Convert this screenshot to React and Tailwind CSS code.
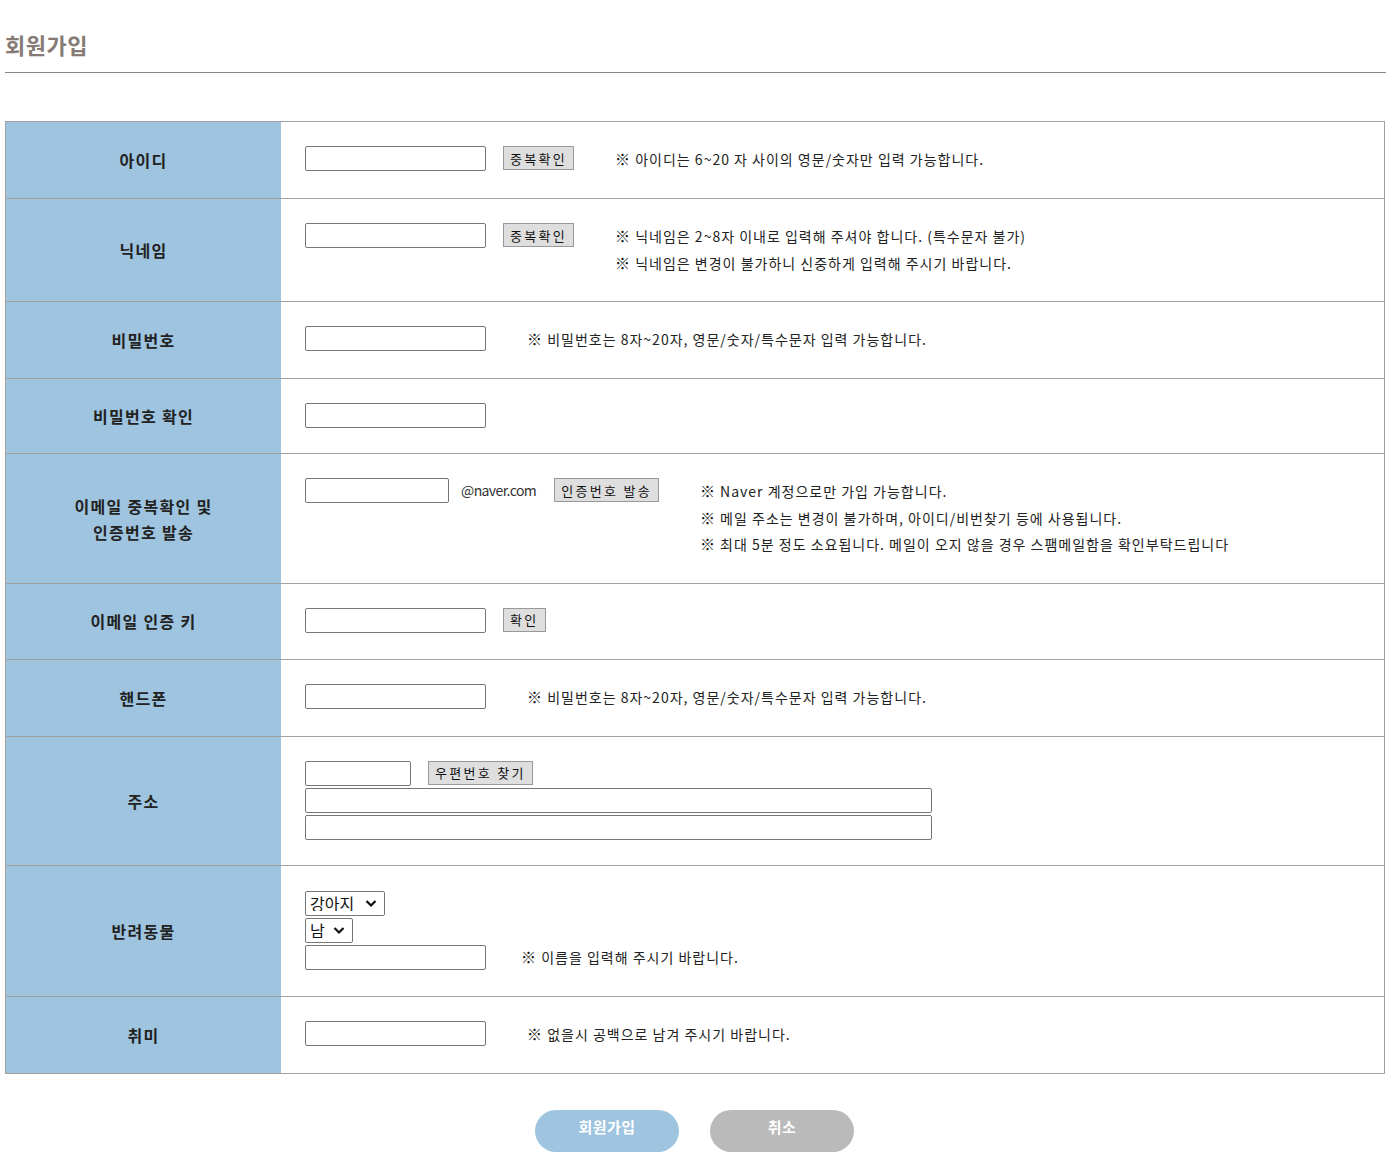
import React from 'react';

const font = { fontFamily: '"Noto Sans CJK KR", "Noto Sans", sans-serif' };

const TextInput = ({ className = 'w-[181px]' }) => (
  <input type="text" className={`h-[25px] shrink-0 border border-[#767676] rounded-[2px] bg-white ${className}`} />
);

const SmallButton = ({ children, className = '' }) => (
  <button className={`h-[24px] shrink-0 px-[6px] border border-[#999] bg-[#dedede] text-[13px] text-[#111] leading-none tracking-[2.3px] ${className}`}>
    {children}
  </button>
);

const Select = ({ value, width }) => (
  <div className={`relative h-[25px] ${width}`}>
    <select className="appearance-none w-full h-full border border-[#767676] rounded-[2px] bg-white pl-[4px] text-[16px] text-[#111] leading-none">
      <option>{value}</option>
    </select>
    <svg className="absolute right-[8px] top-[8px] w-[12px] h-[9px] pointer-events-none" viewBox="0 0 12 9">
      <path d="M1.5 2 L6 6.5 L10.5 2" fill="none" stroke="#111" strokeWidth="2.2" />
    </svg>
  </div>
);

const Notes = ({ lines, className = 'ml-[41px]' }) => (
  <div className={`min-h-[27px] text-[14px] text-[#222] leading-[26.6px] tracking-[1px] ${className}`}>
    {lines.map((l) => (
      <p key={l}>
        <span className="text-[15px] text-[#111]">※</span> {l}
      </p>
    ))}
  </div>
);

const Row = ({ label, children, last }) => (
  <div className={`flex ${last ? '' : 'border-b border-[#a0a0a0]'}`}>
    <div className="w-[275px] shrink-0 bg-[#9ec4df] flex items-center justify-center text-center text-[16px] font-bold text-[#222] leading-[26px] tracking-[1.3px]">
      {label}
    </div>
    <div className="flex-1 pl-[24px] pt-[24px] pb-[25px] flex items-start">{children}</div>
  </div>
);

export default function App() {
  return (
    <div className="px-[5px] bg-white min-h-[1159px]" style={font}>
      <div className="pt-[29px] pb-[12px] border-b border-[#888]">
        <h2 className="text-[22px] font-bold text-[#857b74] leading-[31px] tracking-[0.5px]">회원가입</h2>
      </div>

      <div className="mt-[48px] border border-[#a0a0a0] w-[1380px]">
        <Row label="아이디">
          <TextInput />
          <SmallButton className="ml-[17px]">중복확인</SmallButton>
          <Notes lines={['아이디는 6~20 자 사이의 영문/숫자만 입력 가능합니다.']} />
        </Row>
        <Row label="닉네임">
          <TextInput />
          <SmallButton className="ml-[17px]">중복확인</SmallButton>
          <Notes
            lines={[
              '닉네임은 2~8자 이내로 입력해 주셔야 합니다. (특수문자 불가)',
              '닉네임은 변경이 불가하니 신중하게 입력해 주시기 바랍니다.',
            ]}
          />
        </Row>
        <Row label="비밀번호">
          <TextInput />
          <Notes lines={['비밀번호는 8자~20자, 영문/숫자/특수문자 입력 가능합니다.']} />
        </Row>
        <Row label="비밀번호 확인">
          <TextInput />
        </Row>
        <Row
          label={
            <>
              이메일 중복확인 및
              <br />
              인증번호 발송
            </>
          }
        >
          <TextInput className="w-[144px]" />
          <span className="ml-[12px] text-[14px] text-[#333] leading-[25px] tracking-[-0.6px]">@naver.com</span>
          <SmallButton className="ml-[18px] tracking-[1.9px]">인증번호 발송</SmallButton>
          <Notes
            lines={[
              'Naver 계정으로만 가입 가능합니다.',
              '메일 주소는 변경이 불가하며, 아이디/비번찾기 등에 사용됩니다.',
              '최대 5분 정도 소요됩니다. 메일이 오지 않을 경우 스팸메일함을 확인부탁드립니다',
            ]}
          />
        </Row>
        <Row label="이메일 인증 키">
          <TextInput />
          <SmallButton className="ml-[17px]">확인</SmallButton>
          <div className="h-[26px]" />
        </Row>
        <Row label="핸드폰">
          <TextInput />
          <Notes lines={['비밀번호는 8자~20자, 영문/숫자/특수문자 입력 가능합니다.']} />
        </Row>
        <Row label="주소">
          <div className="flex flex-col gap-[2px]">
            <div className="flex items-start">
              <TextInput className="w-[106px]" />
              <SmallButton className="ml-[17px]">우편번호 찾기</SmallButton>
            </div>
            <TextInput className="w-[627px]" />
            <TextInput className="w-[627px]" />
          </div>
        </Row>
        <Row label="반려동물">
          <div className="flex flex-col gap-[2px] pt-[1px] pb-[1px]">
            <Select value="강아지" width="w-[80px]" />
            <Select value="남" width="w-[48px]" />
            <TextInput />
          </div>
          <Notes className="ml-[35px] mt-[54px]" lines={['이름을 입력해 주시기 바랍니다.']} />
        </Row>
        <Row label="취미" last>
          <TextInput />
          <Notes lines={['없을시 공백으로 남겨 주시기 바랍니다.']} />
        </Row>
      </div>

      <div className="flex justify-center gap-[31px] mt-[36px] pr-[2px]">
        <button className="w-[144px] h-[42px] pb-[8px] rounded-full bg-[#9ec4df] text-white text-[15px] font-bold tracking-[0.5px]">회원가입</button>
        <button className="w-[144px] h-[42px] pb-[8px] rounded-full bg-[#bababa] text-white text-[15px] font-bold tracking-[0.5px]">취소</button>
      </div>
    </div>
  );
}
